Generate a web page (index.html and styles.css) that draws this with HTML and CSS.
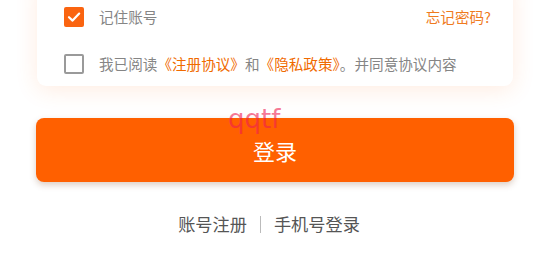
FILE: index.html
```html
<!DOCTYPE html>
<html lang="zh">
<head>
<meta charset="utf-8">
<link rel="stylesheet" href="styles.css">
</head>
<body>
<div class="page">
  <div class="card">
    <div class="row">
      <label class="check">
        <span class="box checked">
          <svg viewBox="0 0 20 20" width="20" height="20"><path d="M5 10.2 L8.6 13.6 L15.2 6.6" fill="none" stroke="#fff" stroke-width="2.2" stroke-linecap="round" stroke-linejoin="round"/></svg>
        </span>
        <span class="label">记住账号</span>
      </label>
      <a class="forgot">忘记密码?</a>
    </div>
    <div class="row">
      <label class="check">
        <span class="box"></span>
        <span class="label">我已阅读<span class="link">《注册协议》</span>和<span class="link">《隐私政策》</span>。并同意协议内容</span>
      </label>
    </div>
  </div>
  <div class="btn-wrap">
    <button class="login">登录</button>
    <span class="mark">qqtf</span>
  </div>
  <div class="links">
    <span>账号注册</span>
    <span class="sep"></span>
    <span>手机号登录</span>
  </div>
</div>
</body>
</html>
```
FILE: styles.css
```css
html, body {
  margin: 0;
  padding: 0;
  background: #ffffff;
}
body {
  width: 550px;
  height: 275px;
  overflow: hidden;
  font-family: "Noto Sans CJK SC", "Noto Sans", sans-serif;
}
.page {
  display: flex;
  flex-direction: column;
}
.card {
  margin: -20px 37px 0 37px;
  padding: 27px 22px 12px 27px;
  background: #fff;
  border-radius: 0 0 9px 9px;
  box-shadow: 0 4px 22px rgba(255, 120, 40, 0.14);
  display: flex;
  flex-direction: column;
  gap: 27px;
}
.row {
  height: 20px;
  display: flex;
  align-items: center;
  justify-content: space-between;
}
.check {
  display: flex;
  align-items: center;
  gap: 15px;
}
.box {
  width: 20px;
  height: 20px;
  box-sizing: border-box;
  border: 2px solid #9a9a9a;
  border-radius: 2px;
  display: flex;
}
.box.checked {
  border: none;
  background: #fa6410;
}
.label {
  font-size: 14.6px;
  color: #858585;
  line-height: 20px;
}
.link {
  color: #f06a00;
}
.forgot {
  font-size: 14.6px;
  color: #ef7a1e;
  line-height: 20px;
}
.btn-wrap {
  position: relative;
  margin: 32px 36px 0 36px;
}
.login {
  display: block;
  width: 100%;
  height: 64px;
  border: none;
  border-radius: 8px;
  background: #ff6000;
  color: #fff;
  font-family: "Noto Sans CJK SC", sans-serif;
  font-size: 22px;
  padding: 0;
  box-shadow: 0 3px 6px rgba(120, 60, 20, 0.25);
}
.mark {
  position: absolute;
  left: 192px;
  top: -14px;
  font-family: "DejaVu Sans", sans-serif;
  font-size: 26px;
  line-height: 30px;
  color: rgba(240, 30, 80, 0.6);
}
.links {
  margin-top: 30px;
  padding-right: 12px;
  display: flex;
  justify-content: center;
  align-items: center;
  gap: 13px;
  font-size: 17.2px;
  color: #555;
  line-height: 24px;
}
.sep {
  width: 1px;
  height: 17px;
  background: #bbb;
}
```
